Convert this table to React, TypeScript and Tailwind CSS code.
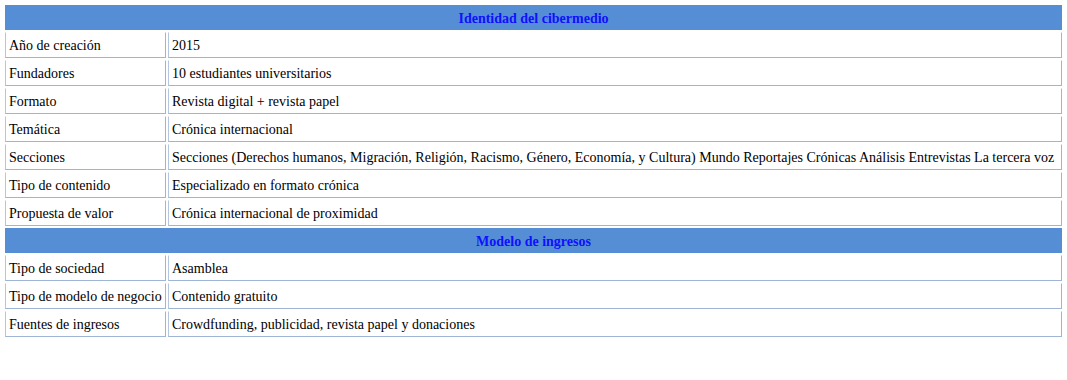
const identidad: [string, string][] = [
  ['Año de creación', '2015'],
  ['Fundadores', '10 estudiantes universitarios'],
  ['Formato', 'Revista digital + revista papel'],
  ['Temática', 'Crónica internacional'],
  [
    'Secciones',
    'Secciones (Derechos humanos, Migración, Religión, Racismo, Género, Economía, y Cultura) Mundo Reportajes Crónicas Análisis Entrevistas La tercera voz',
  ],
  ['Tipo de contenido', 'Especializado en formato crónica'],
  ['Propuesta de valor', 'Crónica internacional de proximidad'],
];

const ingresos: [string, string][] = [
  ['Tipo de sociedad', 'Asamblea'],
  ['Tipo de modelo de negocio', 'Contenido gratuito'],
  ['Fuentes de ingresos', 'Crowdfunding, publicidad, revista papel y donaciones'],
];

const Header = ({ title }: { title: string }) => (
  <tr>
    <th
      colSpan={2}
      className="h-[25px] bg-[#558ed5] px-0 pt-[2px] pb-0 text-center align-middle text-[14px] leading-none font-bold text-[#1010ff]"
    >
      {title}
    </th>
  </tr>
);

const Row = ({ label, value }: { label: string; value: string }) => (
  <tr>
    <td className="h-[26px] overflow-visible whitespace-nowrap border border-t-white border-l-[#b4c6e0] border-r-[#9fb5d6] border-b-[#9fb5d6] px-[3px] pt-[2px] pb-0 align-middle leading-none">
      {label}
    </td>
    <td className="h-[26px] whitespace-nowrap border border-t-white border-l-[#b4c6e0] border-r-[#9fb5d6] border-b-[#9fb5d6] px-[3px] pt-[2px] pb-0 align-middle leading-none">
      {value}
    </td>
  </tr>
);

export default function App() {
  return (
    <div className="min-h-[380px] bg-white p-[3px] font-['Liberation_Serif',serif] text-[14px] text-black">
      <table className="w-[1061px] table-fixed border-separate border-spacing-[2px]">
        <colgroup>
          <col className="w-[161px]" />
          <col />
        </colgroup>
        <tbody>
          <Header title="Identidad del cibermedio" />
          {identidad.map(([l, v]) => (
            <Row key={l} label={l} value={v} />
          ))}
          <Header title="Modelo de ingresos" />
          {ingresos.map(([l, v]) => (
            <Row key={l} label={l} value={v} />
          ))}
        </tbody>
      </table>
    </div>
  );
}
